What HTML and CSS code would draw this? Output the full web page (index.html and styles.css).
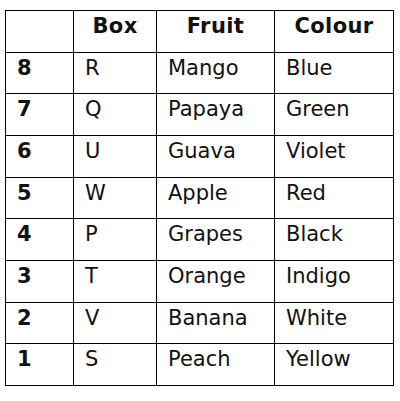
FILE: index.html
```html
<!DOCTYPE html>
<html>
<head>
<meta charset="utf-8">
<link rel="stylesheet" href="styles.css">
</head>
<body>
<table class="grid">
  <colgroup>
    <col class="c-num">
    <col class="c-box">
    <col class="c-fruit">
    <col class="c-colour">
  </colgroup>
  <thead>
    <tr>
      <th></th>
      <th>Box</th>
      <th>Fruit</th>
      <th>Colour</th>
    </tr>
  </thead>
  <tbody>
    <tr><td class="num">8</td><td>R</td><td>Mango</td><td>Blue</td></tr>
    <tr><td class="num">7</td><td>Q</td><td>Papaya</td><td>Green</td></tr>
    <tr><td class="num">6</td><td>U</td><td>Guava</td><td>Violet</td></tr>
    <tr><td class="num">5</td><td>W</td><td>Apple</td><td>Red</td></tr>
    <tr><td class="num">4</td><td>P</td><td>Grapes</td><td>Black</td></tr>
    <tr><td class="num">3</td><td>T</td><td>Orange</td><td>Indigo</td></tr>
    <tr><td class="num">2</td><td>V</td><td>Banana</td><td>White</td></tr>
    <tr><td class="num">1</td><td>S</td><td>Peach</td><td>Yellow</td></tr>
  </tbody>
</table>
</body>
</html>
```

FILE: styles.css
```css
html, body {
  margin: 0;
  padding: 0;
  background: #ffffff;
}

body {
  padding: 10px 0 0 5px;
  font-family: "DejaVu Sans", Verdana, sans-serif;
  font-size: 21px;
  color: #111111;
}

.grid {
  border-collapse: collapse;
  table-layout: fixed;
  width: 388px;
}

.c-num { width: 68px; }
.c-box { width: 83px; }
.c-fruit { width: 118px; }
.c-colour { width: 119px; }

.grid th,
.grid td {
  border: 1px solid #000000;
  height: 41.67px;
  padding: 3px 10px 0 11px;
  vertical-align: top;
  text-align: left;
  font-weight: normal;
  line-height: normal;
  box-sizing: border-box;
}

.grid th {
  font-weight: bold;
  text-align: center;
  letter-spacing: 0.4px;
  padding-left: 10px;
}

.grid td.num {
  font-weight: bold;
}
```
